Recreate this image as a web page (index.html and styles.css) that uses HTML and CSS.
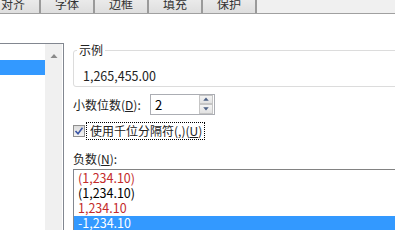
FILE: index.html
```html
<!DOCTYPE html>
<html lang="zh-CN">
<head>
    <meta charset="UTF-8">
    <title>设置单元格格式</title>
    <link rel="stylesheet" href="styles.css">
</head>
<body>
<div class="tabs">
    <span class="tab tab_first">对齐</span><span class="tab">字体</span><span class="tab">边框</span><span class="tab">填充</span><span class="tab">保护</span>
</div>
<div class="main">
    <div class="side">
        <div class="cat_list">
            <ul class="cat_items">
                <li></li>
                <li class="active"></li>
            </ul>
            <div class="scroll">
                <svg width="17" height="17" viewBox="0 0 17 17"><path d="M5.5 12 L9 8 L12.5 12 Z" fill="#8a8a8a"/></svg>
            </div>
        </div>
    </div>
    <div class="content">
        <div class="group">
            <span class="group_title">示例</span>
            <div class="sample">1,265,455.00</div>
        </div>
        <div class="row_decimal">
            <span class="label">小数位数(<u>D</u>):</span>
            <div class="spin">
                <span class="spin_value">2</span>
                <div class="spin_btns">
                    <span class="spin_btn"><svg width="13" height="8" viewBox="0 0 13 8"><path d="M3.5 6 L6.5 2.5 L9.5 6 Z" fill="#4d6185"/></svg></span>
                    <span class="spin_btn"><svg width="13" height="8" viewBox="0 0 13 8"><path d="M3.5 2 L6.5 5.5 L9.5 2 Z" fill="#4d6185"/></svg></span>
                </div>
            </div>
        </div>
        <div class="row_check">
            <span class="check">
                <svg width="12" height="12" viewBox="0 0 12 12"><path d="M2.5 6 L5 8.8 L9.5 2.8" fill="none" stroke="#3a55a5" stroke-width="1.6"/></svg>
            </span>
            <span class="check_label">使用千位分隔符(,)(<u>U</u>)</span>
        </div>
        <div class="label neg_label">负数(<u>N</u>):</div>
        <ul class="neg_list">
            <li class="red">(1,234.10)</li>
            <li>(1,234.10)</li>
            <li class="red">1,234.10</li>
            <li class="active">-1,234.10</li>
        </ul>
    </div>
</div>
</body>
</html>
```
FILE: styles.css
```css
*{
    padding:0;
    margin:0;
    box-sizing: border-box;
}
ul ,li {
    list-style: none;
}
html, body {
    width: 395px;
    height: 230px;
    overflow: hidden;
    background: #fff;
}
body {
    font-family: "Noto Sans CJK SC", "Noto Sans", sans-serif;
    font-size: 12px;
    color: #000;
}
.tabs {
    display: flex;
    height: 14px;
    background: #f0f0f0;
    border-bottom: 1px solid #a0a0a0;
    overflow: hidden;
}
.tab {
    width: 54px;
    height: 17px;
    line-height: 12px;
    margin-top: -4px;
    padding-top: 2px;
    text-align: center;
    color: #333;
    background: linear-gradient(#eeeeee, #dedede);
    border-right: 2px solid #9a9a9a;
}
.tab_first {
    margin-left: -13px;
}
.main {
    display: flex;
    height: 216px;
}
.side {
    width: 64px;
    padding-top: 29px;
}
.cat_list {
    display: flex;
    height: 100%;
    border-top: 1px solid #828790;
    border-right: 1px solid #828790;
}
.cat_items {
    width: 45px;
    padding-top: 1px;
}
.cat_items li {
    height: 15px;
}
.cat_items .active {
    background: #3399ff;
}
.scroll {
    width: 17px;
    background: #f0f0f0;
    padding-top: 2px;
}
.scroll svg {
    display: block;
}
.content {
    flex: 1;
    padding-left: 9px;
    padding-top: 36px;
}
.group {
    height: 37px;
    margin-right: -10px;
    border: 1px solid #dcdcdc;
    border-radius: 3px;
}
.group_title {
    display: inline-block;
    margin: -9px 0 0 3px;
    padding: 0 2px;
    line-height: 16px;
    background: #fff;
    vertical-align: top;
    color: #222;
}
.sample {
    padding-left: 9px;
    margin-top: -1px;
    line-height: 18px;
    font-size: 12.5px;
    color: #222;
}
.row_decimal {
    display: flex;
    align-items: center;
    margin-top: 6px;
    height: 22px;
}
.label {
    color: #222;
    width: 77px;
}
.spin {
    display: flex;
    width: 65px;
    height: 21px;
    border: 1px solid #abadb3;
}
.spin_value {
    flex: 1;
    padding-left: 4px;
    line-height: 19px;
    font-size: 13px;
}
.spin_btns {
    display: flex;
    flex-direction: column;
    width: 15px;
    padding: 0 1px 0 0;
}
.spin_btn {
    display: flex;
    align-items: center;
    justify-content: center;
    height: 9.5px;
    background: linear-gradient(#f4f4f4, #e2e2e2);
    border: 1px solid #c5c5c5;
    overflow: hidden;
}
.row_check {
    display: flex;
    align-items: center;
    margin-top: 7px;
    height: 18px;
}
.check {
    display: block;
    width: 12px;
    height: 12px;
    border: 1px solid #8f8f8f;
    background: linear-gradient(#dcdcdc, #f4f4f4);
}
.check svg {
    display: block;
    margin: -1px;
}
.check_label {
    margin-left: 1px;
    padding: 0 2px 0 3px;
    line-height: 16px;
    border: 1px dotted #000;
    color: #222;
}
.neg_label {
    margin-top: 11px;
    line-height: 16px;
}
.neg_list {
    margin-top: 2px;
    margin-right: -10px;
    height: 70px;
    padding-top: 1px;
    border-top: 1px solid #828282;
    border-left: 1px solid #828790;
    font-size: 12.5px;
}
.neg_list li {
    height: 15px;
    line-height: 13px;
    padding-left: 4px;
    padding-bottom: 2px;
}
.neg_list .red {
    color: #c42b2b;
}
.neg_list .active {
    background: #3399ff;
    color: #fff;
}
```
